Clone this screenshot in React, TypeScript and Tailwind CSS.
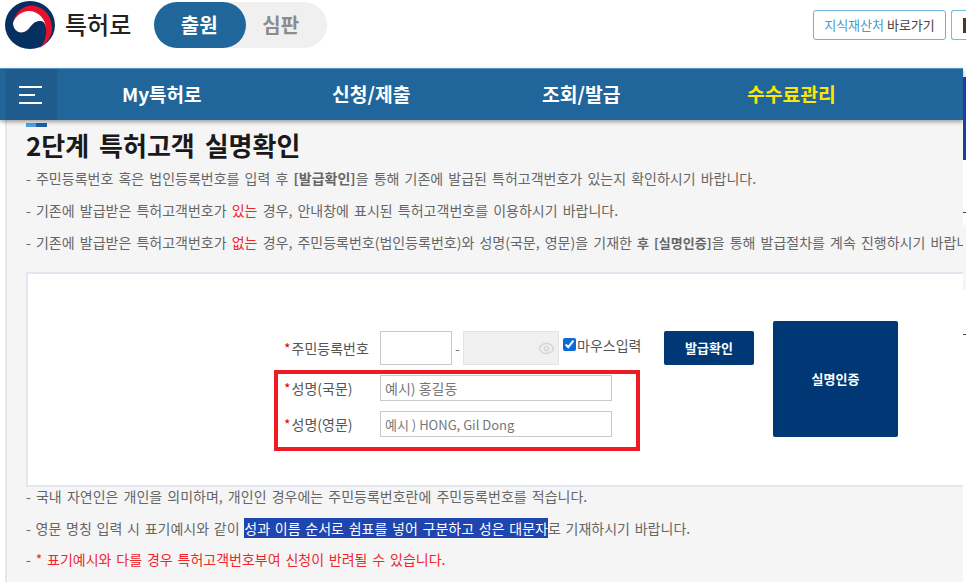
import { Eye } from "lucide-react";

const font = "font-['Noto_Sans_CJK_KR','Noto_Sans',sans-serif]";

function Logo() {
    return (
        <svg width="50" height="48" viewBox="0 0 50 48" className="shrink-0">
            <ellipse cx="25" cy="24" rx="25" ry="24" fill="#05305f" />
            <path d="M8 22C10 10 20 4 28 4.500C39 6 47 15 47 27C47 36 41 43 35 47C39 42 42 35 41 28C39 17 31 11 24 11C16 11 10 15 8 22Z" fill="#e8112d" />
            <path d="M8 22C10 15 17 10 24 10C33 10 41 18 41 28C41 21 37 19 32 20.500C26 22 25 29 19 31C13 33 8 28 8 22Z" fill="#fff" />
        </svg>
    );
}

function Field({ label, placeholder, size }: { label: string; placeholder: string; size: string }) {
    return (
        <div className="flex items-center h-[26px]">
            <label className="w-[102px] shrink-0 pl-[6px] text-[14px] text-[#555]">
                <span className="text-[#e60012] mr-[1px]">*</span>
                {label}
            </label>
            <input
                placeholder={placeholder}
                className={`${size} w-[232px] h-[26px] border border-[#c9c9c9] bg-white px-[4px] placeholder:text-[#777] outline-none`}
            />
        </div>
    );
}

export default function App() {
    return (
        <div className={`${font} w-[966px] h-[582px] overflow-hidden bg-white relative`}>
            <header className="h-[68px] flex items-start pl-[5px]">
                <div className="mt-[1px]">
                    <Logo />
                </div>
                <span className="ml-[10px] mt-[6px] text-[24px] leading-[36px] font-medium text-[#222]">특허로</span>
                <div className="ml-[23px] mt-[2px] w-[173px] h-[46px] rounded-full bg-[#f0f0f0] flex">
                    <div className="w-[92px] h-[46px] pr-[2px] rounded-full bg-[#20669a] text-white font-bold text-[20px] flex items-center justify-center">출원</div>
                    <div className="flex-1 pr-[12px] text-[#8c8c8c] font-bold text-[20px] flex items-center justify-center">심판</div>
                </div>
                <div className="ml-auto mt-[10px] flex gap-[5px]">
                    <button className="w-[133px] h-[30px] border border-[#6eb1da] rounded-[3px] text-[13px] bg-white">
                        <span className="text-[#4a9ad0]">지식재산처</span> <span className="text-[#444]">바로가기</span>
                    </button>
                    <div className="w-[15px] h-[30px] border border-[#6ec0e0] rounded-l-[3px] border-r-0 flex items-center pl-[11px]">
                        <div className="w-[3px] h-[15px] bg-[#4a3728]" />
                    </div>
                </div>
            </header>

            <nav className="h-[52px] w-[963px] bg-[#20669a] border-t border-[#5a93bc] flex items-center text-[19.3px] font-bold text-white shadow-[0_2px_4px_rgba(0,0,0,0.35)] relative pl-[5px]">
                <div className="w-[52px] h-full bg-[#1f5b8c] flex flex-col justify-center items-start pl-[14px] gap-[6px]">
                    <div className="w-[23px] h-[2px] bg-white" />
                    <div className="w-[16px] h-[2px] bg-white" />
                    <div className="w-[23px] h-[2px] bg-white" />
                </div>
                <span className="ml-[65px] w-[210px] text-[19px]">My특허로</span>
                <span className="w-[210px]">신청/제출</span>
                <span className="w-[205px]">조회/발급</span>
                <span className="text-[#ffe600]">수수료관리</span>
            </nav>

            <main className="h-[462px] w-[958px] overflow-hidden bg-[#f5f5f6] ml-[5px] border-l-[2px] border-[#e3e6f0] pl-[19px] text-[14px] text-[#666]">
                <div className="flex w-[21px] h-[4px] mt-[3px]">
                    <div className="w-[10px] bg-[#4fa3d8]" />
                    <div className="w-[11px] bg-[#1f5fa8]" />
                </div>
                <h1 className="mt-[2px] text-[26px] leading-[32px] font-bold text-[#1a1a1a] [word-spacing:4px]">2단계 특허고객 실명확인</h1>
                <div className="mt-[7px] flex flex-col gap-[12px] whitespace-nowrap leading-[20px] [word-spacing:2px]">
                    <p>- 주민등록번호 혹은 법인등록번호를 입력 후 <b>[발급확인]</b>을 통해 기존에 발급된 특허고객번호가 있는지 확인하시기 바랍니다.</p>
                    <p>- 기존에 발급받은 특허고객번호가 <span className="text-[#f0262c]">있는</span> 경우, 안내창에 표시된 특허고객번호를 이용하시기 바랍니다.</p>
                    <p>- 기존에 발급받은 특허고객번호가 <span className="text-[#f0262c]">없는</span> 경우, 주민등록번호(법인등록번호)와 성명(국문, 영문)을 기재한 <b className="text-[13px]">후 [실명인증]</b>을 통해 발급절차를 계속 진행하시기 바랍니다.</p>
                </div>

                <section className="mt-[19px] w-[938px] h-[215px] bg-white border-y-2 border-l-2 border-[#e3e6f0] flex pt-[47px] pl-[246px]">
                    <div className="w-[366px] shrink-0 pt-[10px]">
                        <div className="flex items-center h-[34px] pl-[10px] whitespace-nowrap">
                            <label className="w-[96px] shrink-0 text-[14px] text-[#555]">
                                <span className="text-[#e60012] mr-[1px]">*</span>주민등록번호
                            </label>
                            <input className="w-[72px] shrink-0 h-[34px] border border-[#c9c9c9] bg-white outline-none" />
                            <span className="w-[11px] shrink-0 text-center text-[#777]">-</span>
                            <div className="w-[96px] shrink-0 h-[34px] bg-[#f0f0f0] border border-[#e4e4e4] flex items-center justify-end pr-[3px]">
                                <Eye size={17} className="text-[#d4d4d4]" />
                            </div>
                            <input type="checkbox" defaultChecked className="ml-[4px] shrink-0 w-[13px] h-[13px] accent-[#0a6ad6] self-start mt-[7px]" />
                            <span className="text-[14px] text-[#555] self-start ml-[1px] leading-[20px] mt-[4px]">마우스입력</span>
                        </div>
                        <div className="mt-[5px] w-[366px] h-[81px] border-[4px] border-[#ed1c24] flex flex-col pt-[1px] gap-[10px]">
                            <Field label="성명(국문)" placeholder="예시) 홍길동" size="text-[14px]" />
                            <Field label="성명(영문)" placeholder="예시 ) HONG, Gil Dong" size="text-[13px]" />
                        </div>
                    </div>
                    <div className="ml-[24px] pt-[10px]">
                        <button className="w-[90px] h-[34px] bg-[#003876] rounded-[2px] text-white text-[13px] font-bold">발급확인</button>
                    </div>
                    <button className="ml-[19px] w-[125px] h-[116px] bg-[#003876] rounded-[2px] text-white text-[13px] font-bold">실명인증</button>
                </section>

                <div className="-mt-[1px] flex flex-col gap-[12px] whitespace-nowrap leading-[20px] [word-spacing:2px]">
                    <p>- 국내 자연인은 개인을 의미하며, 개인인 경우에는 주민등록번호란에 주민등록번호를 적습니다.</p>
                    <p className="[word-spacing:1.6px]">- 영문 명칭 입력 시 표기예시와 같이 <span className="bg-[#1f45b0] text-white">성과 이름 순서로 쉼표를 넣어 구분하고 성은 대문자</span>로 기재하시기 바랍니다.</p>
                    <p className="[word-spacing:1.7px] -mt-[1px]">- <span className="text-[#f0262c]">* 표기예시와 다를 경우 특허고객번호부여 신청이 반려될 수 있습니다.</span></p>
                </div>
            </main>

            <div className="absolute left-[963px] top-[77px] w-[3px] h-[83px] bg-[#1c3f9a]" />
            <div className="absolute left-[963px] top-[212px] w-[3px] h-[1px] bg-[#444]" />
            <div className="absolute left-[963px] top-[225px] w-[3px] h-[65px] bg-[#f5f5f6]" />
            <div className="absolute left-[963px] top-[325px] w-[3px] h-[10px] border-b border-[#444]" />
        </div>
    );
}
